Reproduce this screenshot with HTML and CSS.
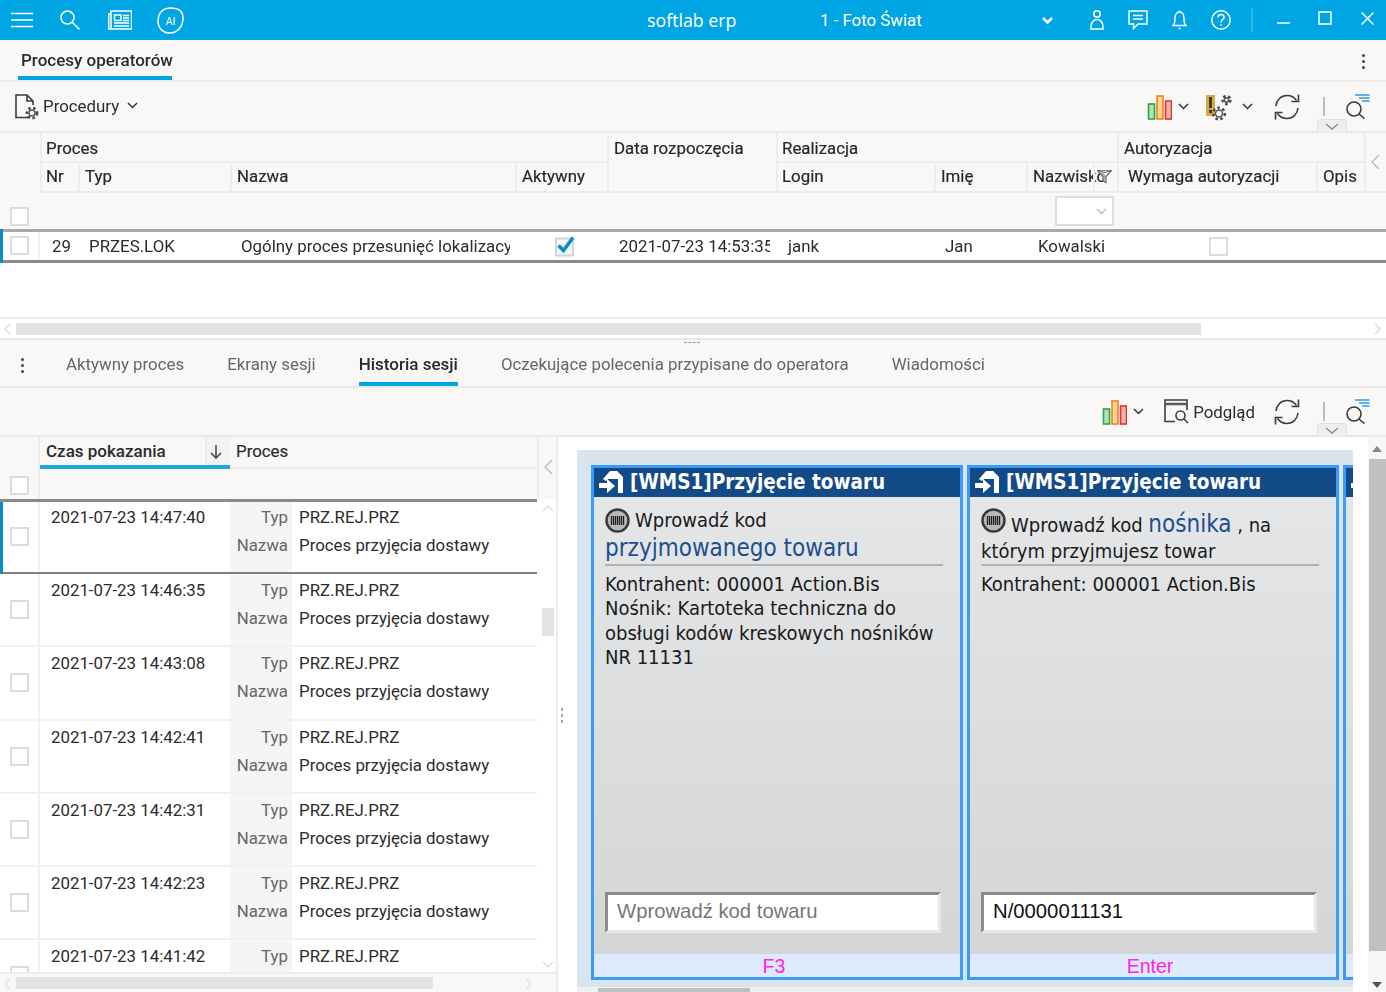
FILE: index.html
```html
<!DOCTYPE html>
<html lang="pl">
<head>
<meta charset="utf-8">
<title>softlab erp</title>
<link rel="stylesheet" href="styles.css">
</head>
<body>
<div class="app">
  <header class="topbar">
    <div class="top-left">
      <svg class="ti ic-menu" width="22" height="16" viewBox="0 0 22 16"><path d="M0 1.500H22M0 8H22M0 14.500H22"/></svg>
      <svg class="ti ic-search" width="20" height="20" viewBox="0 0 20 20"><circle cx="7.500" cy="7.500" r="6.500"/><path d="M12.500 12.500L19.500 19.500"/></svg>
      <svg class="ti ic-news" width="24" height="20" viewBox="0 0 24 20"><path d="M3 1H23.500V19H3zM3 4H.7V19H3"/><path d="M6.500 5H13V10.500H6.500zM15 5.500H21M15 8H21M15 10.500H21M6 13H21M6 16H21"/></svg>
      <svg class="ti ic-ai" width="27" height="27" viewBox="0 0 27 27"><path d="M13.500 1C21 1 26 4 26 11C26 20 20 26 12.500 26C6 26 1 21 1 14C1 6 6 1 13.500 1Z"/><text class="ai-text" x="13.500" y="17.500">AI</text></svg>
    </div>
    <div class="brand">softlab erp</div>
    <div class="company">1 - Foto Świat</div>
    <svg class="ti ic-chev-top" width="11" height="7" viewBox="0 0 11 7"><path d="M1 1L5.500 5.500L10 1"/></svg>
    <svg class="ti ic-user" width="14" height="20" viewBox="0 0 14 20"><circle cx="7" cy="4" r="3.200"/><path d="M1 19C.5 13 3 9.500 7 9.500S13.500 13 13 19Z"/></svg>
    <svg class="ti ic-chat" width="20" height="20" viewBox="0 0 20 20"><path d="M1 1H19V14H10L5.500 18.500V14H1Z"/><path d="M5 5.500H15M5 9H15"/></svg>
    <svg class="ti ic-bell" width="15" height="20" viewBox="0 0 15 20"><path d="M1 15.500C3 14 3 11 3 8C3 4.500 5 2 7.500 2S12 4.500 12 8C12 11 12 14 14 15.500Z"/><path d="M7.500 .5V2M6.500 18.500H8.500"/></svg>
    <svg class="ti ic-help" width="20" height="20" viewBox="0 0 20 20"><circle cx="10" cy="10" r="9.200"/><path d="M7 7.500C7 5.500 8.500 4.500 10 4.500S13 5.500 13 7.500C13 9.500 10 9.500 10 12.500M10 14.300V15.800"/></svg>
    <span class="top-sep"></span>
    <svg class="ti ic-min" width="13" height="4" viewBox="0 0 13 4"><path d="M0 2H13"/></svg>
    <svg class="ti ic-max" width="14" height="14" viewBox="0 0 14 14"><path d="M1 1H13V13H1Z"/></svg>
    <svg class="ti ic-close" width="13" height="13" viewBox="0 0 13 13"><path d="M.5 .5L12.500 12.500M12.500 .5L.5 12.500"/></svg>
  </header>

  <nav class="tabs-main">
    <div class="tab-main">Procesy operatorów</div>
    <div class="kebab kebab-right"><i></i><i></i><i></i></div>
  </nav>

  <div class="toolbar toolbar-top">
    <svg class="ic-doc" width="25" height="27" viewBox="0 0 25 27"><path class="ln" d="M13 23.500H1V1H12L18 7V11M12 1V7H18"/><circle class="gear-c" cx="17" cy="19" r="3"/><circle class="gear-t2" cx="17" cy="19" r="5.200"/></svg>
    <span class="tool-label">Procedury</span>
    <svg class="chev chev-proc" width="11" height="7" viewBox="0 0 11 7"><path d="M1 1L5.500 5.500L10 1"/></svg>
    <div class="tool-right">
      <svg class="ic-chart" width="25" height="25" viewBox="0 0 25 25"><rect class="bar-g" x="1.500" y="9" width="6" height="15"/><rect class="bar-o" x="10" y="1" width="6" height="23"/><rect class="bar-r" x="18.500" y="6" width="6" height="18"/></svg>
      <svg class="chev chev-chart" width="11" height="7" viewBox="0 0 11 7"><path d="M1 1L5.500 5.500L10 1"/></svg>
      <svg class="ic-warn" width="26" height="26" viewBox="0 0 26 26"><rect class="warn-b" x="0" y="0" width="9" height="21"/><path class="warn-x" d="M4.500 2V13M4.500 15V18"/><circle class="gear-c" cx="13" cy="18.500" r="3.500"/><circle class="gear-t2" cx="13" cy="18.500" r="5.800"/><circle class="gear-c" cx="20.500" cy="5" r="2.200"/><circle class="gear-t2" cx="20.500" cy="5" r="4"/></svg>
      <svg class="chev chev-warn" width="11" height="7" viewBox="0 0 11 7"><path d="M1 1L5.500 5.500L10 1"/></svg>
      <svg class="ic-refresh" width="26" height="26" viewBox="0 0 26 26"><path class="ln" d="M2 12C2.500 6 7 1.500 13 1.500C17 1.500 20.500 3.500 22.500 6.500M24 14C23.500 20 19 24.500 13 24.500C9 24.500 5.500 22.500 3.500 19.500"/><path class="ln" d="M24.500 .5V7.500H17.500M1.500 25.500V18.500H8.500"/></svg>
      <span class="tool-sep"></span>
      <svg class="ic-find" width="26" height="25" viewBox="0 0 26 25"><path class="find-b" d="M11 1H25.500M15 4H25.500M18 7H25.500"/><circle class="ln" cx="10" cy="15" r="7"/><path class="ln" d="M15 20L20.500 24.500"/></svg>
    </div>
    <div class="pull-tab"><svg width="14" height="7" viewBox="0 0 14 7"><path d="M1 1L7 6L13 1"/></svg></div>
  </div>

  <section class="top-grid">
    <div class="head-grid cols-top">
      <div class="hc gutter"><span class="cb"></span></div>
      <div class="hc g-proces">Proces</div>
      <div class="hc g-data">Data rozpoczęcia</div>
      <div class="hc g-real">Realizacja</div>
      <div class="hc g-auto">Autoryzacja</div>
      <div class="hc g-coll"><svg class="coll-chev" width="9" height="16" viewBox="0 0 9 16"><path d="M8 1L1 8L8 15"/></svg></div>
      <div class="hc hc-sub s-nr">Nr</div>
      <div class="hc hc-sub">Typ</div>
      <div class="hc hc-sub">Nazwa</div>
      <div class="hc hc-sub">Aktywny</div>
      <div class="hc hc-sub s-login">Login</div>
      <div class="hc hc-sub">Imię</div>
      <div class="hc hc-sub s-nazw">Nazwisko<span class="filter-box"><svg width="15" height="14" viewBox="0 0 15 14"><path d="M.5 1.500H14.500L9 7.500V13.500L6 12V7.500Z"/><path d="M.5 1.500L7.500 3.500L14.500 1.500"/></svg></span></div>
      <div class="hc hc-sub s-wym">Wymaga autoryzacji</div>
      <div class="hc hc-sub">Opis</div>
      <div class="filter-row">
        <div class="select"><svg width="11" height="7" viewBox="0 0 11 7"><path d="M1 1L5.500 5.500L10 1"/></svg></div>
      </div>
    </div>
    <div class="data-row cols-top">
      <div class="dc dc-gutter"><span class="cb"></span></div>
      <div class="dc dc-nr">29</div>
      <div class="dc dc-typ">PRZES.LOK</div>
      <div class="dc dc-name">Ogólny proces przesunięć lokalizacy</div>
      <div class="dc dc-check"><svg width="22" height="22" viewBox="0 0 22 22"><rect class="chk-box" x="2" y="3.500" width="17" height="17"/><path class="chk-mark" d="M4.500 10.500L9.500 15.500L19 2.500"/></svg></div>
      <div class="dc dc-date">2021-07-23 14:53:35</div>
      <div class="dc dc-login">jank</div>
      <div class="dc dc-imie">Jan</div>
      <div class="dc dc-nazw">Kowalski</div>
      <div class="dc dc-auth"><span class="cb"></span></div>
    </div>
    <div class="empty-area"></div>
    <div class="hscroll hscroll-top">
      <svg class="sc-chev sc-l" width="7" height="12" viewBox="0 0 7 12"><path d="M6 1L1 6L6 11"/></svg>
      <div class="thumb thumb-top"></div>
      <svg class="sc-chev sc-r" width="7" height="12" viewBox="0 0 7 12"><path d="M1 1L6 6L1 11"/></svg>
    </div>
  </section>

  <nav class="tabs-sub">
    <div class="grip-h"></div>
    <div class="kebab kebab-left"><i></i><i></i><i></i></div>
    <div class="tab-sub">Aktywny proces</div>
    <div class="tab-sub">Ekrany sesji</div>
    <div class="tab-sub active">Historia sesji</div>
    <div class="tab-sub">Oczekujące polecenia przypisane do operatora</div>
    <div class="tab-sub">Wiadomości</div>
  </nav>

  <div class="toolbar toolbar-sub">
    <div class="tool-right">
      <svg class="ic-chart" width="25" height="25" viewBox="0 0 25 25"><rect class="bar-g" x="1.500" y="9" width="6" height="15"/><rect class="bar-o" x="10" y="1" width="6" height="23"/><rect class="bar-r" x="18.500" y="6" width="6" height="18"/></svg>
      <svg class="chev chev-chart" width="11" height="7" viewBox="0 0 11 7"><path d="M1 1L5.500 5.500L10 1"/></svg>
      <svg class="ic-prev" width="25" height="25" viewBox="0 0 25 25"><path class="ln" d="M11 22.500H1V1H23V11"/><path class="prev-bar" d="M1 5H23"/><circle class="ln" cx="16.500" cy="16.500" r="4.500"/><path class="ln" d="M20 20L24 24"/></svg>
      <span class="tool-label">Podgląd</span>
      <svg class="ic-refresh" width="26" height="26" viewBox="0 0 26 26"><path class="ln" d="M2 12C2.500 6 7 1.500 13 1.500C17 1.500 20.500 3.500 22.500 6.500M24 14C23.500 20 19 24.500 13 24.500C9 24.500 5.500 22.500 3.500 19.500"/><path class="ln" d="M24.500 .5V7.500H17.500M1.500 25.500V18.500H8.500"/></svg>
      <span class="tool-sep"></span>
      <svg class="ic-find" width="26" height="25" viewBox="0 0 26 25"><path class="find-b" d="M11 1H25.500M15 4H25.500M18 7H25.500"/><circle class="ln" cx="10" cy="15" r="7"/><path class="ln" d="M15 20L20.500 24.500"/></svg>
    </div>
    <div class="pull-tab"><svg width="14" height="7" viewBox="0 0 14 7"><path d="M1 1L7 6L13 1"/></svg></div>
  </div>

  <main class="lower">
    <section class="left-pane">
      <div class="left-head">
        <div class="lh lh-gutter"><span class="cb"></span></div>
        <div class="lh lh-sort"><span>Czas pokazania</span><span class="sort-box"><svg width="12" height="14" viewBox="0 0 12 14"><path d="M6 0V13M1 8L6 13L11 8"/></svg></span></div>
        <div class="lh lh-proc">Proces</div>
        <div class="lh lh-coll"><svg class="coll-chev" width="9" height="16" viewBox="0 0 9 16"><path d="M8 1L1 8L8 15"/></svg></div>
        <div class="lh lh-filter"></div>
        <div class="lh lh-filter2"></div>
      </div>
      <div class="left-body">
        <div class="rows">
          <div class="row selected"><div class="r-cb"><span class="cb"></span></div><div class="r-time">2021-07-23 14:47:40</div><div class="r-lab"><div>Typ</div><div>Nazwa</div></div><div class="r-val"><div>PRZ.REJ.PRZ</div><div>Proces przyjęcia dostawy</div></div></div>
          <div class="row"><div class="r-cb"><span class="cb"></span></div><div class="r-time">2021-07-23 14:46:35</div><div class="r-lab"><div>Typ</div><div>Nazwa</div></div><div class="r-val"><div>PRZ.REJ.PRZ</div><div>Proces przyjęcia dostawy</div></div></div>
          <div class="row"><div class="r-cb"><span class="cb"></span></div><div class="r-time">2021-07-23 14:43:08</div><div class="r-lab"><div>Typ</div><div>Nazwa</div></div><div class="r-val"><div>PRZ.REJ.PRZ</div><div>Proces przyjęcia dostawy</div></div></div>
          <div class="row"><div class="r-cb"><span class="cb"></span></div><div class="r-time">2021-07-23 14:42:41</div><div class="r-lab"><div>Typ</div><div>Nazwa</div></div><div class="r-val"><div>PRZ.REJ.PRZ</div><div>Proces przyjęcia dostawy</div></div></div>
          <div class="row"><div class="r-cb"><span class="cb"></span></div><div class="r-time">2021-07-23 14:42:31</div><div class="r-lab"><div>Typ</div><div>Nazwa</div></div><div class="r-val"><div>PRZ.REJ.PRZ</div><div>Proces przyjęcia dostawy</div></div></div>
          <div class="row"><div class="r-cb"><span class="cb"></span></div><div class="r-time">2021-07-23 14:42:23</div><div class="r-lab"><div>Typ</div><div>Nazwa</div></div><div class="r-val"><div>PRZ.REJ.PRZ</div><div>Proces przyjęcia dostawy</div></div></div>
          <div class="row"><div class="r-cb"><span class="cb"></span></div><div class="r-time">2021-07-23 14:41:42</div><div class="r-lab"><div>Typ</div></div><div class="r-val"><div>PRZ.REJ.PRZ</div></div></div>
        </div>
        <div class="vscroll-left">
          <svg class="sc-up" width="12" height="7" viewBox="0 0 12 7"><path d="M1 6L6 1L11 6"/></svg>
          <div class="thumb thumb-left"></div>
          <svg class="sc-down" width="12" height="7" viewBox="0 0 12 7"><path d="M1 1L6 6L11 1"/></svg>
        </div>
      </div>
      <div class="hscroll hscroll-left">
        <svg class="sc-chev sc-l" width="7" height="12" viewBox="0 0 7 12"><path d="M6 1L1 6L6 11"/></svg>
        <div class="thumb thumb-bottom"></div>
        <svg class="sc-chev sc-r2" width="7" height="12" viewBox="0 0 7 12"><path d="M1 1L6 6L1 11"/></svg>
      </div>
    </section>
    <div class="splitter"><span></span><span></span><span></span></div>
    <section class="right-pane">
      <div class="preview-col">
        <div class="preview">
          <article class="card">
            <h2 class="card-head"><svg class="ret" width="25" height="24" viewBox="0 0 25 24"><path d="M4 9L11 1H18L24 7V23H19V9H9L7 11Z"/><path d="M0 13H8V9L16 16L8 23V18H0Z"/></svg>[WMS1]Przyjęcie towaru</h2>
            <div class="card-body">
              <div class="prompt"><svg class="bc" width="25" height="25" viewBox="0 0 25 25"><circle class="bc-o" cx="12.500" cy="12.500" r="11"/><path class="bc-b" d="M6.500 8V17M8.500 8V17M10.500 8V17M12.500 8V17M14.500 8V17M16.500 8V17M18.500 8V17"/></svg>Wprowadź kod<br><span class="hl hl-low">przyjmowanego towaru</span></div>
              <div class="info">Kontrahent: 000001 Action.Bis<br>Nośnik: Kartoteka techniczna do obsługi kodów kreskowych nośników NR 11131</div>
              <div class="field placeholder">Wprowadź kod towaru</div>
            </div>
            <div class="card-foot">F3</div>
          </article>
          <article class="card">
            <h2 class="card-head"><svg class="ret" width="25" height="24" viewBox="0 0 25 24"><path d="M4 9L11 1H18L24 7V23H19V9H9L7 11Z"/><path d="M0 13H8V9L16 16L8 23V18H0Z"/></svg>[WMS1]Przyjęcie towaru</h2>
            <div class="card-body">
              <div class="prompt prompt-shift"><svg class="bc" width="25" height="25" viewBox="0 0 25 25"><circle class="bc-o" cx="12.500" cy="12.500" r="11"/><path class="bc-b" d="M6.500 8V17M8.500 8V17M10.500 8V17M12.500 8V17M14.500 8V17M16.500 8V17M18.500 8V17"/></svg>Wprowadź kod <span class="hl">nośnika</span> , na<br>którym przyjmujesz towar</div>
              <div class="info">Kontrahent: 000001 Action.Bis</div>
              <div class="field">N/0000011131</div>
            </div>
            <div class="card-foot">Enter</div>
          </article>
          <article class="card">
            <h2 class="card-head"><svg class="ret" width="25" height="24" viewBox="0 0 25 24"><path d="M4 9L11 1H18L24 7V23H19V9H9L7 11Z"/><path d="M0 13H8V9L16 16L8 23V18H0Z"/></svg></h2>
            <div class="card-body"></div>
            <div class="card-foot"></div>
          </article>
        </div>
        <div class="preview-scroll"><div class="pv-thumb"></div></div>
      </div>
      <div class="vscroll-right">
        <span class="tri-up"></span>
        <div class="vr-thumb"></div>
        <span class="tri-down"></span>
      </div>
    </section>
  </main>
</div>
</body>
</html>
```

FILE: styles.css
```css
* { box-sizing: border-box; }
html, body { margin: 0; padding: 0; }
body { width: 1386px; height: 992px; overflow: hidden; font-family: Roboto, "Liberation Sans", sans-serif; font-size: 16.850px; color: #2c2c2c; background: #f9f8f7; }
.app { width: 1386px; height: 992px; display: flex; flex-direction: column; overflow: hidden; filter: blur(.3px); }
svg { display: block; flex: none; fill: none; }

/* top bar */
.topbar { height: 40px; flex: none; background: #00a5e3; display: flex; align-items: center; color: #fff; }
.ti { fill: none; stroke: #fff; stroke-width: 1.500; }
.top-left { width: 647px; flex: none; display: flex; align-items: center; padding-left: 11px; }
.ic-search { margin-left: 27px; }
.ic-news { margin-left: 28px; }
.ic-ai { margin-left: 25px; }
.ai-text { fill: #fff; stroke: none; font-family: Roboto, sans-serif; font-size: 11px; text-anchor: middle; }
.brand { width: 173px; flex: none; font-family: "Open Sans", sans-serif; font-size: 17.800px; }
.company { width: 222px; flex: none; font-size: 16.850px; }
.ic-chev-top { stroke-width: 2.500; }
.ic-user { margin-left: 37px; }
.ic-chat { margin-left: 24px; }
.ic-bell { margin-left: 24px; }
.ic-help { margin-left: 24px; }
.top-sep { width: 2px; height: 24px; margin-left: 20px; background: #33b5e8; }
.ic-min { margin-left: 24px; margin-top: 6px; }
.ic-max { margin-left: 28px; margin-top: -4px; }
.ic-close { margin-left: 29px; margin-top: -3px; }

/* tabs */
.tabs-main { height: 42px; flex: none; display: flex; align-items: flex-start; justify-content: space-between; padding: 0 18px; border-bottom: 2px solid #ebebe9; }
.tab-main { width: 154px; height: 40px; padding: 10px 0 0 3px; font-weight: 500; font-size: 17px; line-height: 21px; white-space: nowrap; border-bottom: 4px solid #00a5e3; }
.kebab { display: flex; flex-direction: column; gap: 3px; width: 3px; }
.kebab i { display: block; width: 3px; height: 3px; border-radius: 50%; background: #444; }
.kebab-right { margin-top: 14px; margin-right: 3px; }

/* toolbars */
.toolbar { flex: none; position: relative; display: flex; align-items: center; border-bottom: 2px solid #e8e8e6; }
.toolbar-top { height: 51px; padding-left: 15px; }
.toolbar-sub { height: 49px; }
.tool-label { color: #2c2c2c; }
.toolbar-top > .tool-label { margin-top: -2px; }
.ic-doc { margin-right: 3px; margin-top: 2px; }
.ln { fill: none; stroke: #3b3b3b; stroke-width: 1.600; }
.gear-c { fill: none; stroke: #555; stroke-width: 1.500; }
.gear-t2 { fill: none; stroke: #444; stroke-width: 2.400; stroke-dasharray: 2.500 2.500; }
.chev { stroke: #333; stroke-width: 1.500; }
.chev-proc { margin-left: 8px; margin-top: -2px; }
.tool-right { position: absolute; right: 16px; top: 0; bottom: 0; display: flex; align-items: center; }
.toolbar-top .ic-chart { margin-top: 2px; }
.toolbar-sub .ic-chart { margin-top: 2px; }
.bar-g { fill: #b6dfb4; stroke: #27a745; stroke-width: 1.600; }
.bar-o { fill: #fbd98f; stroke: #ef7f2c; stroke-width: 1.600; }
.bar-r { fill: #f5b4ae; stroke: #e5312c; stroke-width: 1.600; }
.chev-chart { margin-left: 6px; }
.ic-warn { margin-left: 17px; margin-top: 2px; }
.warn-b { fill: #d7a94a; }
.warn-x { stroke: #2e2e2e; stroke-width: 2.600; }
.chev-warn { margin-left: 10px; }
.toolbar-top .ic-refresh { margin-left: 21px; }
.toolbar-sub .ic-refresh { margin-left: 19px; }
.tool-sep { width: 2px; height: 19px; margin: 0 19px 0 23px; background: #bdbdbd; }
.find-b { stroke: #2c9be0; stroke-width: 1.500; }
.pull-tab { position: absolute; left: 1317px; bottom: -1px; width: 30px; height: 13px; background: #efefed; border: 1px solid #e2e2e0; border-bottom: 0; border-radius: 4px 4px 0 0; display: flex; justify-content: center; padding-top: 3px; }
.pull-tab svg { stroke: #8b8b8b; stroke-width: 1.500; }
.ic-prev { margin-left: 20px; margin-right: 4px; }
.prev-bar { stroke: #5a5a5a; stroke-width: 2.500; }

/* top grid */
.cols-top { display: grid; grid-template-columns: 40px 38px 152px 285px 92px 169px 158px 92px 91px 199px 48px 22px; }
.cb { display: block; width: 19px; height: 19px; background: #fff; border: 2px solid #dcdcdc; }
.head-grid { grid-template-rows: 30px 30px 36px; height: 96px; }
.hc { padding: 4px 0 0 5px; line-height: 22px; white-space: nowrap; border-left: 2px solid #ededeb; border-bottom: 2px solid #ededeb; overflow: hidden; color: #282828; -webkit-text-stroke: .2px #282828; }
.gutter { grid-row: 1 / 4; grid-column: 1; border: 0; padding: 74px 0 0 10px; }
.g-proces { grid-column: 2 / 6; padding-left: 4px; }
.g-data { grid-column: 6; grid-row: 1 / 3; padding-left: 5px; }
.g-real { grid-column: 7 / 10; padding-left: 4px; }
.g-auto { grid-column: 10 / 12; padding-left: 5px; }
.g-coll { grid-column: 12; grid-row: 1 / 3; padding: 21px 0 0 5px; }
.coll-chev { stroke: #bdbdbd; stroke-width: 1.500; }
.hc-sub { padding-top: 2px; }
.s-nr { grid-column: 2; grid-row: 2; padding-left: 4px; }
.s-login { grid-column: 7; grid-row: 2; padding-left: 4px; }
.s-nazw { position: relative; }
.s-wym { padding-left: 9px; }
.filter-box { position: absolute; right: 0; top: 0; bottom: 0; width: 24px; border-left: 2px solid #ededeb; padding: 6px 0 0 2px; }
.filter-box svg { stroke: #666; stroke-width: 1.200; fill: rgba(249, 248, 247, .6); }
.filter-row { grid-column: 2 / 13; grid-row: 3; display: flex; align-items: center; padding-left: 1015px; }
.select { width: 59px; height: 30px; background: #fff; border: 2px solid #dedede; display: flex; align-items: center; justify-content: flex-end; padding-right: 5px; }
.select svg { stroke: #bbb; stroke-width: 1.500; }
.data-row { height: 34px; background: #fff; border-top: 3px solid #a9a9a9; border-bottom: 3px solid #8a8a8a; position: relative; align-items: center; }
.data-row::before { content: ""; position: absolute; left: 0; top: -3px; bottom: -3px; width: 3px; background: #0a8fc4; }
.dc { white-space: nowrap; overflow: hidden; line-height: 24px; }
.dc-gutter { padding-left: 10px; height: 28px; border-right: 2px solid #f1f1f1; padding-top: 4px; }
.dc-nr { padding-left: 12px; }
.dc-typ { padding-left: 11px; }
.dc-name { padding-left: 11px; width: 280px; }
.dc-check { padding-left: 39px; overflow: visible; }
.chk-box { fill: #f7f7f7; stroke: #d4d4d4; stroke-width: 2; }
.chk-mark { stroke: #0a8fc4; stroke-width: 3.600; }
.dc-date { padding-left: 12px; width: 163px; }
.dc-login { padding-left: 12px; }
.dc-imie { padding-left: 11px; }
.dc-nazw { padding-left: 12px; overflow: visible; }
.dc-auth { padding-left: 92px; }
.empty-area { height: 56px; background: #fff; border-bottom: 2px solid #ededeb; }
.hscroll { display: flex; align-items: center; background: #fff; position: relative; }
.hscroll-top { height: 21px; border-bottom: 2px solid #e8e8e6; padding-left: 16px; }
.thumb { background: #e3e3e3; }
.thumb-top { width: 1185px; height: 12px; }
.sc-chev { stroke: #dedede; stroke-width: 1.500; position: absolute; top: 4px; }
.sc-l { left: 4px; }
.sc-r { right: 5px; }
.sc-r2 { left: 525px; }

/* sub tabs */
.tabs-sub { height: 48px; flex: none; display: flex; gap: 43px; padding-left: 66px; position: relative; border-bottom: 2px solid #e8e8e6; }
.grip-h { position: absolute; left: 684px; top: 2px; width: 16px; height: 1px; border-top: 1px dashed #999; }
.kebab-left { position: absolute; left: 21px; top: 18px; }
.tab-sub { height: 46px; padding-top: 14px; line-height: 21px; color: #666; white-space: nowrap; }
.tab-sub.active { color: #2a2a2a; font-weight: 500; font-size: 17px; border-bottom: 4px solid #00a5e3; }

/* lower */
.lower { flex: 1; display: flex; min-height: 0; }
.left-pane { width: 558px; flex: none; display: flex; flex-direction: column; border-right: 2px solid #ededeb; background: #f9f8f7; }
.left-head { display: grid; grid-template-columns: 40px 190px 307px 19px; grid-template-rows: 32px 30px; height: 62px; flex: none; }
.lh { white-space: nowrap; }
.lh-gutter { grid-column: 1; grid-row: 1 / 3; padding: 39px 0 0 10px; border-right: 2px solid #ededeb; }
.lh-sort { grid-column: 2; grid-row: 1; display: flex; justify-content: space-between; padding-left: 6px; font-weight: 500; font-size: 17px; line-height: 28px; border-bottom: 4px solid #1fa6dc; }
.sort-box { width: 25px; border-left: 2px solid #ededeb; background: #f3f3f1; display: block; padding: 8px 0 0 3px; }
.sort-box svg { stroke: #444; stroke-width: 1.500; }
.lh-proc { grid-column: 3; grid-row: 1; padding-left: 6px; line-height: 28px; border-bottom: 2px solid #ededeb; -webkit-text-stroke: .2px #282828; }
.lh-coll { grid-column: 4; grid-row: 1 / 3; padding: 22px 0 0 5px; border-left: 2px solid #ededeb; }
.lh-filter { grid-column: 2; grid-row: 2; }
.lh-filter2 { grid-column: 3; grid-row: 2; }
.left-body { height: 473px; flex: none; display: flex; background: #fff; }
.rows { width: 537px; flex: none; height: 473px; overflow: hidden; border-top: 3px solid #8a8a8a; }
.row { display: grid; grid-template-columns: 40px 190px 62px 245px; height: 73.200px; border-bottom: 2px solid #f1f1f1; }
.row.selected { border-bottom: 2px solid #808080; position: relative; margin-top: -1px; }
.row.selected::before { content: ""; position: absolute; left: 0; top: -3px; bottom: -2px; width: 3px; background: #0a8fc4; }
.r-cb { padding: 26px 0 0 10px; border-right: 2px solid #f1f1f1; }
.r-time { padding: 2px 0 0 11px; line-height: 28px; }
.r-lab { background: #f5f5f5; text-align: right; padding: 2px 4px 0 0; line-height: 28px; color: #666; }
.r-val { padding: 2px 0 0 7px; line-height: 28px; white-space: nowrap; }
.vscroll-left { width: 19px; flex: none; display: flex; flex-direction: column; align-items: center; padding: 3px 0 0 2px; background: #fff; }
.sc-up, .sc-down { stroke: #dfdfdf; stroke-width: 1.500; }
.sc-up { margin-top: 3px; }
.thumb-left { width: 12px; height: 28px; margin-top: 96px; background: #e3e3e3; }
.sc-down { margin-top: 325px; }
.hscroll-left { height: 20px; flex: none; padding-left: 16px; background: #f9f8f7; border-top: 2px solid #ededeb; }
.thumb-bottom { width: 417px; height: 12px; }
.splitter { width: 10px; flex: none; background: #fff; display: flex; flex-direction: column; align-items: center; gap: 3px; padding: 271px 2px 0 0; }
.splitter span { width: 2px; height: 3px; background: #aaa; }
.right-pane { flex: 1; display: flex; background: #fff; min-width: 0; }
.preview-col { width: 800px; flex: none; padding: 13px 0 0 9px; display: flex; flex-direction: column; min-height: 0; overflow: hidden; }
.preview { width: 776px; height: 537px; flex: none; background: #d8e5ef; padding: 15px 0 7px 14px; display: flex; gap: 4px; overflow: hidden; }
.preview-scroll { height: 5px; width: 776px; flex: none; background: #f0f0f0; padding: 1px 0 0 21px; }
.pv-thumb { width: 152px; height: 4px; background: #c0c0c0; }
.card { width: 372px; flex: none; display: flex; flex-direction: column; border: 3px solid #3a9bfb; font-family: "DejaVu Sans", sans-serif; font-stretch: condensed; color: #1a1a1a; }
.card-head { margin: 0; height: 29px; flex: none; background: #134a88; color: #fff; font-size: 20.500px; font-weight: 700; line-height: 28px; display: flex; align-items: center; gap: 6px; padding: 0 0 2px 5px; white-space: nowrap; overflow: hidden; }
.ret { fill: #fff; }
.card-body { flex: 1; min-height: 0; background: linear-gradient(#e5e6e8, #d4d5d7); padding: 11px 0 0 11px; position: relative; display: flex; flex-direction: column; }
.prompt { width: 338px; height: 58px; flex: none; font-size: 20px; line-height: 24px; border-bottom: 2px solid #b2b2b2; }
.prompt-shift { padding-top: 2px; }
.bc { float: left; margin: 0 5px -1px 0; }
.prompt-shift .bc { margin-top: -2px; }
.bc-o { fill: #b9b9b9; stroke: #3a3a3a; stroke-width: 2.500; }
.bc-b { stroke: #222; stroke-width: 1.300; }
.hl { color: #1c4f8f; font-size: 24px; line-height: 29px; }
.hl-low { position: relative; top: 2px; }
.info { width: 335px; font-size: 20px; line-height: 24.300px; margin-top: 6px; }
.field { position: absolute; left: 11px; bottom: 21px; width: 336px; height: 41px; background: #fff; border: 3px solid #e8e8e8; border-top-color: #8c8c8c; border-left-color: #8c8c8c; padding-left: 9px; line-height: 32px; font-family: "Liberation Sans", sans-serif; font-size: 20.300px; color: #111; white-space: nowrap; }
.field.placeholder { color: #777; }
.card-foot { height: 23px; flex: none; background: #ddeafb; color: #ff22ee; text-align: center; font-family: "Liberation Sans", sans-serif; font-size: 19.500px; line-height: 25px; padding-right: 6px; }
.vscroll-right { width: 18px; flex: none; background: #f7f7f7; display: flex; flex-direction: column; align-items: center; }
.tri-up { width: 0; height: 0; border: 5px solid transparent; border-top: 0; border-bottom: 6px solid #888; margin-top: 9px; }
.vr-thumb { width: 17px; height: 492px; margin-top: 7px; background: #c0c0c0; }
.tri-down { width: 0; height: 0; border: 5px solid transparent; border-bottom: 0; border-top: 6px solid #555; margin-top: 31px; }
```
